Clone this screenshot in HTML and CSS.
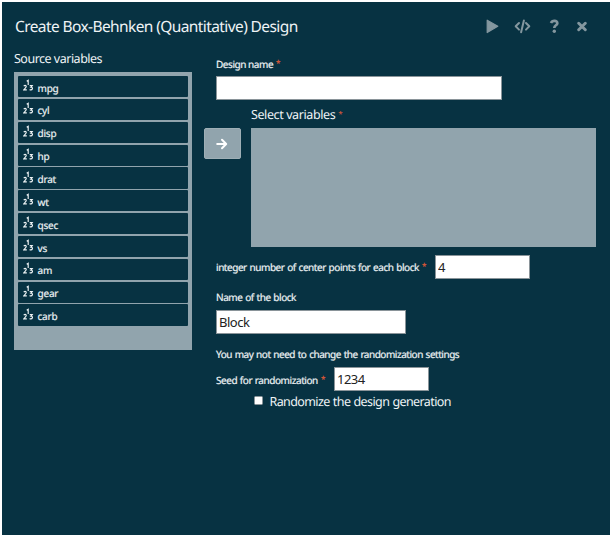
FILE: index.html
```html
<!DOCTYPE html>
<html lang="en">
<head>
<meta charset="utf-8">
<title>Create Box-Behnken (Quantitative) Design</title>
<link rel="stylesheet" href="styles.css">
</head>
<body>
<svg width="0" height="0" class="defs">
  <symbol id="scale" viewBox="0 0 12 13">
    <g fill="none" stroke="currentColor" stroke-width="1.15">
      <path d="M3.7 2.2 5.2 1.2V6M.7 7.1Q2.1 5.8 3.1 6.8C4 8.1 1.8 9.4.8 10.8H3.8M6.7 6.6H9.2L7.9 8.3C10.4 8 9.8 11.6 6.6 10.6"/>
    </g>
  </symbol>
</svg>
<main class="dialog">
  <header class="header">
    <h1 class="title">Create Box-Behnken (Quantitative) Design</h1>
    <nav class="actions">
      <svg width="13" height="15" viewBox="0 0 13 15"><path d="M1.2 1.2 11.8 7.3 1.2 13.5Z" fill="currentColor" stroke="currentColor" stroke-width="1.2" stroke-linejoin="round"/></svg>
      <svg width="17" height="15" viewBox="0 0 17 15"><path d="M5 4 1.7 7.3 5 10.6M12 4 15.3 7.3 12 10.6M9.9 1.4 7.1 13.2" fill="none" stroke="currentColor" stroke-width="2" stroke-linecap="round" stroke-linejoin="round"/></svg>
      <svg width="11" height="15" viewBox="0 0 11 15"><path d="M2 4C3.2 1.1 8.5 1.2 8.3 4.3 8.2 6.4 5.3 6.3 5.3 9" fill="none" stroke="currentColor" stroke-width="2.7"/><circle cx="5.3" cy="12.3" r="1.7" fill="currentColor"/></svg>
      <svg width="10" height="15" viewBox="0 0 10 15"><path d="M1.7 4.2 8.3 10.8M8.3 4.2 1.7 10.8" stroke="currentColor" stroke-width="2.9" stroke-linecap="round"/></svg>
    </nav>
  </header>
  <div class="body">
    <section class="source">
      <h2 class="heading"><span class="t-source">Source variables</span></h2>
      <ul class="list">
        <li><svg class="scale"><use href="#scale"/></svg>mpg</li>
        <li><svg class="scale"><use href="#scale"/></svg>cyl</li>
        <li><svg class="scale"><use href="#scale"/></svg>disp</li>
        <li><svg class="scale"><use href="#scale"/></svg>hp</li>
        <li><svg class="scale"><use href="#scale"/></svg>drat</li>
        <li><svg class="scale"><use href="#scale"/></svg>wt</li>
        <li><svg class="scale"><use href="#scale"/></svg>qsec</li>
        <li><svg class="scale"><use href="#scale"/></svg>vs</li>
        <li><svg class="scale"><use href="#scale"/></svg>am</li>
        <li><svg class="scale"><use href="#scale"/></svg>gear</li>
        <li><svg class="scale"><use href="#scale"/></svg>carb</li>
      </ul>
    </section>
    <section class="form">
      <label class="label name-label" for="name"><span class="t-name">Design name</span><i class="req">*</i></label>
      <input class="field wide" id="name">
      <div class="select">
        <button class="move" aria-label="Move"><svg width="12" height="12" viewBox="0 0 12 12"><path d="M1.2 6H10M6 1.8 10.2 6 6 10.2" fill="none" stroke="currentColor" stroke-width="2" stroke-linecap="round" stroke-linejoin="round"/></svg></button>
        <div class="target">
          <div class="target-label"><span class="t-select">Select variables</span><i class="req">*</i></div>
          <div class="drop"></div>
        </div>
      </div>
      <div class="row"><label class="label points-label" for="points"><span class="t-points">integer number of center points for each block</span><i class="req">*</i></label><input class="field points" id="points" value="4"></div>
      <label class="label block-label" for="block"><span class="t-block">Name of the block</span></label>
      <input class="field block" id="block" value="Block">
      <p class="label note"><span class="t-note">You may not need to change the randomization settings</span></p>
      <div class="row seed-row"><label class="label seed-label" for="seed"><span class="t-seed">Seed for randomization</span><i class="req">*</i></label><input class="field seed" id="seed" value="1234"></div>
      <label class="check"><input type="checkbox" class="box"><span class="t-check">Randomize the design generation</span></label>
    </section>
  </div>
</main>
</body>
</html>
```
FILE: styles.css
```css
* { box-sizing: border-box; margin: 0; padding: 0; }
body { padding: 2px; background: #fff; font-family: "Noto Sans", "Open Sans", sans-serif; color: #eef3f5; text-rendering: geometricPrecision; }
.defs { position: absolute; }
.dialog { width: 608px; height: 533px; background: #073242; overflow: hidden; }
.header { height: 46px; padding: 2px 23px 0 13px; display: flex; align-items: center; justify-content: space-between; }
.title { font-size: 15.5px; font-weight: 400; letter-spacing: -0.6px; white-space: nowrap; }
.actions { display: flex; align-items: center; color: #84979f; }
.actions svg { display: block; }
.actions svg:nth-child(2) { margin-left: 15px; }
.actions svg:nth-child(3) { margin-left: 18px; }
.actions svg:nth-child(4) { margin-left: 17px; }
.body { display: flex; padding-left: 12px; }
.source { width: 178px; }
.heading { height: 23.5px; line-height: 21px; font-size: 12.5px; font-weight: 400; white-space: nowrap; }
.list { height: 278px; padding: 4.5px 4px; background: #91a4ad; list-style: none; display: flex; flex-direction: column; gap: 1.6px; }
.list li { height: 21.25px; flex: none; background: #073242; border-radius: 1px; display: flex; align-items: center; padding: 2px 0 0 5px; font-size: 10px; letter-spacing: -0.2px; -webkit-text-stroke: 0.2px currentColor; }
.scale { width: 12px; height: 13px; margin: -4px 2.5px 0 0; }
.form { width: 392px; margin-left: 12px; }
.label { display: flex; align-items: center; font-size: 10px; white-space: nowrap; margin-left: 12px; -webkit-text-stroke: 0.2px currentColor; }
.req { color: #e05a38; font-style: normal; font-size: 8px; margin-left: 3px; line-height: 10px; }
.name-label { height: 28px; padding-top: 4px; }
.field { display: block; height: 24px; border: 1px solid #8a9499; background: #fff; color: #222; padding: 0 2px; font-family: "Noto Sans", sans-serif; font-size: 13px; letter-spacing: -0.5px; }
.wide { width: 285.5px; margin-left: 12px; }
.select { display: flex; padding-top: 1px; }
.move { width: 36.5px; height: 31px; margin: 27px 10.5px 0 0; border: 1px solid #9eafb6; border-radius: 2px; background: #91a4ad; color: #fff; display: flex; align-items: center; justify-content: center; }
.target { width: 345px; }
.target-label { height: 27px; display: flex; align-items: center; font-size: 12.5px; white-space: nowrap; }
.drop { height: 118.5px; background: #91a4ad; }
.row { display: flex; align-items: center; height: 24px; margin-top: 8.5px; }
.points-label { width: 219px; }
.points { width: 95px; }
.block-label { height: 30.5px; padding-top: 6px; }
.block { width: 190px; margin-left: 12px; }
.note { height: 33px; padding-top: 7px; }
.seed-row { margin-top: 0; }
.seed-label { width: 118px; padding-top: 2px; }
.seed { width: 95px; }
.check { display: flex; align-items: center; height: 22px; margin-left: 50px; font-size: 12.5px; white-space: nowrap; }
.box { appearance: none; width: 9px; height: 9px; margin: -2px 6.5px 0 0; background: #fff; border: 1px solid #8a9499; border-radius: 1.5px; }
.t-source { letter-spacing: -0.5px; }
.t-select { letter-spacing: -0.4px; }
.t-name { letter-spacing: -0.45px; }
.t-points { letter-spacing: -0.45px; word-spacing: 0.6px; }
.t-block { letter-spacing: -0.45px; word-spacing: 0.6px; }
.t-note { letter-spacing: -0.47px; word-spacing: 0.6px; }
.t-seed { letter-spacing: -0.42px; word-spacing: 0.4px; }
.t-check { letter-spacing: -0.6px; word-spacing: 0.5px; }
```
